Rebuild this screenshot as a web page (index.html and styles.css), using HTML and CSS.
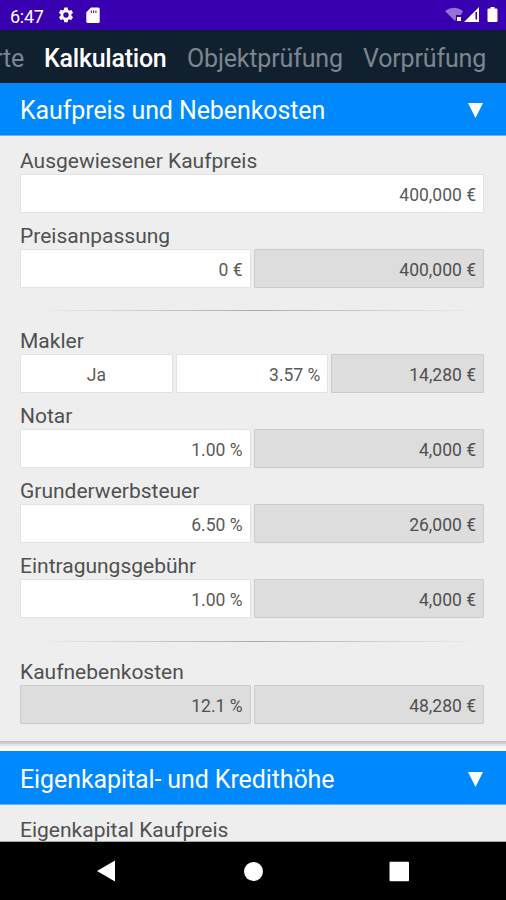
FILE: index.html
```html
<!DOCTYPE html>
<html lang="de">
<head>
<meta charset="utf-8">
<title>Kalkulation</title>
<link rel="stylesheet" href="styles.css">
</head>
<body>
<div class="screen">
  <div class="status">
    <span class="time">6:47</span>
    <svg class="gear" width="18" height="18" viewBox="0 0 24 24"><path fill="#fff" d="M19.14 12.94c.04-.3.06-.61.06-.94s-.02-.64-.07-.94l2.03-1.58a.49.49 0 0 0 .12-.61l-1.92-3.32a.49.49 0 0 0-.59-.22l-2.39.96a7 7 0 0 0-1.62-.94l-.36-2.54A.48.48 0 0 0 13.92 2h-3.84a.48.48 0 0 0-.47.41l-.36 2.54c-.59.24-1.13.57-1.62.94l-2.39-.96a.48.48 0 0 0-.59.22L2.74 8.87a.48.48 0 0 0 .12.61l2.03 1.58c-.05.3-.09.63-.09.94s.02.64.07.94l-2.03 1.58a.49.49 0 0 0-.12.61l1.92 3.32c.12.22.37.29.59.22l2.39-.96c.5.38 1.03.7 1.62.94l.36 2.54c.05.24.24.41.48.41h3.84c.24 0 .44-.17.47-.41l.36-2.54c.59-.24 1.13-.56 1.62-.94l2.39.96c.22.08.47 0 .59-.22l1.92-3.32a.48.48 0 0 0-.12-.61zM12 15.6A3.6 3.6 0 1 1 12 8.400a3.600 3.600 0 0 1 0 7.200z"/></svg>
    <svg class="card-icon" width="14" height="17" viewBox="0 0 14 17"><path fill="#fff" fill-rule="evenodd" d="M5 .5h7.200A1.500 1.500 0 0 1 13.700 2v12.500a1.500 1.500 0 0 1-1.500 1.500H1.800a1.500 1.500 0 0 1-1.500-1.500V5.200zM4.800 3.500v2.500h1v-2.500zm2.300 0v2.500h1v-2.500zm2.300 0v2.500h1v-2.500z"/></svg>
    <svg class="signals" width="56" height="18" viewBox="0 0 56 18"><path fill="#fff" opacity=".45" d="M0 5Q9 -1.500 18 5L16 9h-5v4L10 15z"/><path fill="#fff" d="M12 11h4v4h-4zM19 16L34 1v15z"/><path fill="#3900b1" d="M30.500 6h1.500v7.500h-1.500z"/><path fill="#fff" d="M45.500 1h4v1.500h2q1 0 1 1V15q0 1-1 1h-8q-1 0-1-1V3.500q0-1 1-1h2z"/></svg>
  </div>
  <div class="tabs">
    <span class="tab t0">rte</span><span class="tab active">Kalkulation</span><span class="tab t2">Objektprüfung</span><span class="tab t3">Vorprüfung</span>
  </div>
  <div class="head"><span>Kaufpreis und Nebenkosten</span><svg width="15" height="15" viewBox="0 0 15 15"><path fill="#fff" d="M0 0h15L7.500 15z"/></svg></div>
  <div class="panel">
    <div class="group"><div class="label">Ausgewiesener Kaufpreis</div><div class="row"><div class="box">400,000 €</div></div></div>
    <div class="group"><div class="label">Preisanpassung</div><div class="row"><div class="box">0 €</div><div class="box calc">400,000 €</div></div></div>
    <div class="divider"></div>
    <div class="group"><div class="label">Makler</div><div class="row"><div class="box center">Ja</div><div class="box">3.57 %</div><div class="box calc">14,280 €</div></div></div>
    <div class="group"><div class="label">Notar</div><div class="row"><div class="box">1.00 %</div><div class="box calc">4,000 €</div></div></div>
    <div class="group"><div class="label">Grunderwerbsteuer</div><div class="row"><div class="box">6.50 %</div><div class="box calc">26,000 €</div></div></div>
    <div class="group"><div class="label">Eintragungsgebühr</div><div class="row"><div class="box">1.00 %</div><div class="box calc">4,000 €</div></div></div>
    <div class="divider"></div>
    <div class="group"><div class="label">Kaufnebenkosten</div><div class="row"><div class="box calc">12.1 %</div><div class="box calc">48,280 €</div></div></div>
  </div>
  <div class="gap"></div>
  <div class="head second"><span>Eigenkapital- und Kredithöhe</span><svg width="15" height="15" viewBox="0 0 15 15"><path fill="#fff" d="M0 0h15L7.500 15z"/></svg></div>
  <div class="next"><div class="label">Eigenkapital Kaufpreis</div></div>
  <div class="nav">
    <svg width="506" height="58" viewBox="0 0 506 58"><path fill="#fff" d="M97 29L115 18.500v21z"/><circle fill="#fff" cx="253.500" cy="29.500" r="9.500"/><rect fill="#fff" x="389.500" y="19.700" width="19.500" height="19.500" rx="1"/></svg>
  </div>
</div>
</body>
</html>
```
FILE: styles.css
```css
* { box-sizing: border-box; }
body { margin: 0; font-family: Roboto, "Liberation Sans", sans-serif; background: #eee; }
.screen { width: 506px; height: 900px; overflow: hidden; display: flex; flex-direction: column; background: #eee; }
.screen > div { flex-shrink: 0; }
.status { height: 30px; background: #3900b1; color: #fff; display: flex; align-items: center; padding-left: 10px; }
.time { font-size: 18px; width: 47px; letter-spacing: -.25px; padding-top: 2px; }
.card-icon { margin-left: 11px; }
.signals { margin-left: auto; margin-right: 5px; }
.tabs { height: 53px; background: #10202f; color: #7d868e; display: flex; font-size: 25px; letter-spacing: -.16px; line-height: 57px; white-space: nowrap; border-bottom: 1px solid #0b1c22; overflow: hidden; }
.t0 { width: 45px; margin-left: -6px; margin-right: 5px; }
.tab.active { color: #fff; font-weight: 500; width: 143px; letter-spacing: -.25px; }
.tab.t2 { width: 176px; }
.head { height: 53px; background: #08f; color: #fff; display: flex; align-items: center; justify-content: space-between; padding: 3px 23px 0 20px; font-size: 25px; letter-spacing: -.1px; border-bottom: 1px solid #64b3fa; white-space: nowrap; }
.panel { height: 606px; padding: 2px 22px 0 20px; border-bottom: 1px solid #c4c2c3; }
.group { height: 75.100px; display: flex; flex-direction: column; }
.label { height: 36px; padding-top: 11px; line-height: 24px; font-size: 21px; color: #505050; white-space: nowrap; }
.row { height: 39px; display: flex; gap: 3px; }
.box { flex: 1; background: #fff; border: 1px solid #e2e2e2; border-radius: 1px; text-align: right; padding: 1px 7px 0; line-height: 38px; font-size: 17.500px; color: #5a5a5a; }
.box.calc { background: #ddd; border-color: #cbcbcb; color: #505050; }
.box.center { text-align: center; }
.divider { height: 30px; padding-top: 22px; }
.divider::before { content: ""; display: block; height: 1px; margin: 0 4px 0 14px; background: linear-gradient(90deg, #eee, #aaa 50%, #eee); }
.gap { height: 9px; background: linear-gradient(#cbc9ca 0 1px, #dedcdd 2px, #eee 4px, #fbf8f6 6px); }
.second { height: 54px; }
.next { height: 37px; border-bottom: 1px solid #aaa; }
.next .label { padding: 13px 0 0 20px; }
.nav { height: 58px; background: #000; }
.nav svg { display: block; }
```
